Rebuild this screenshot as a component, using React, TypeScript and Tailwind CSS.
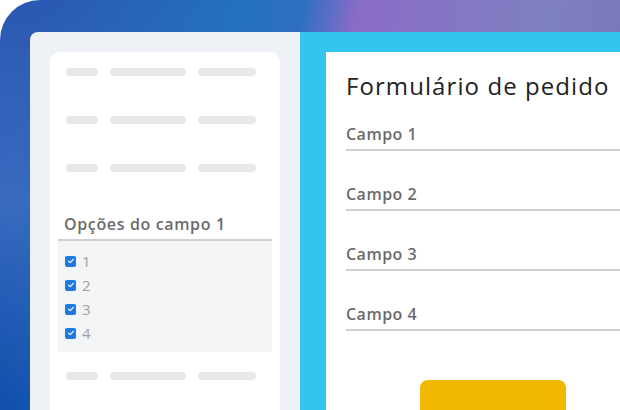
const skeletonRows = [0, 1, 2];
const options = ["1", "2", "3", "4"];
const fields = ["Campo 1", "Campo 2", "Campo 3", "Campo 4"];

function SkeletonRow() {
  return (
    <div className="flex h-2 items-center gap-3">
      <span className="h-2 w-8 rounded-full bg-[#e8e8e8]" />
      <span className="h-2 w-[76px] rounded-full bg-[#e8e8e8]" />
      <span className="h-2 w-[58px] rounded-full bg-[#e8e8e8]" />
    </div>
  );
}

function CheckIcon() {
  return (
    <span className="flex h-[11px] w-[11px] items-center justify-center rounded-[2px] bg-[#1f7ae0]">
      <svg viewBox="0 0 10 10" className="h-2 w-2" fill="none">
        <path d="M2 5.2l2 1.9 4-4.2" stroke="white" strokeWidth="1.5" strokeLinecap="round" strokeLinejoin="round" />
      </svg>
    </span>
  );
}

export default function App() {
  return (
    <div className="h-[410px] w-[620px] overflow-hidden bg-white font-['Open_Sans',sans-serif]">
      <div className="h-full w-full rounded-tl-[40px] bg-[linear-gradient(100deg,rgba(36,112,192,0)_5%,#2470c0_35%,#2f6fc2_44%,#8a6cc8_52%,#7e80c0_80%,#7a70b8_100%),linear-gradient(to_bottom,#2a58b2_0%,#3a6bbf_50%,#0b47a6_100%)] pl-[30px] pt-8">
        <div className="flex h-full">
          <div className="w-[270px] rounded-tl-lg bg-[#eef1f5] px-5 pt-5">
            <div className="h-[400px] rounded-t-[10px] bg-white px-2 pt-4">
              <div className="flex flex-col gap-10 pl-2">
                {skeletonRows.map((r) => (
                  <SkeletonRow key={r} />
                ))}
              </div>
              <div className="mt-[42px] border-b-2 border-[#d0d0d0] pb-[5px] pl-1.5 text-[16px] leading-5 font-semibold tracking-[0.04em] text-[#6b6b6b]">
                Opções do campo 1
              </div>
              <div className="flex flex-col gap-2 bg-[#f3f4f6] pb-[11px] pl-[7px] pt-3">
                {options.map((o) => (
                  <div key={o} className="flex h-4 items-center gap-[6px]">
                    <CheckIcon />
                    <span className="text-[15px] leading-4 font-medium text-[#a0a0a0]">{o}</span>
                  </div>
                ))}
              </div>
              <div className="mt-5 pl-2">
                <SkeletonRow />
              </div>
            </div>
          </div>
          <div className="flex-1 bg-[#35c4ef] pl-[26px] pt-5">
            <div className="h-[400px] bg-white pl-[20px] pt-5">
              <h1 className="text-[24px] leading-7 font-normal tracking-[0.045em] text-[#222]">
                Formulário de pedido
              </h1>
              <div className="mt-6 flex flex-col gap-[33px]">
                {fields.map((f) => (
                  <div key={f} className="border-b-2 border-[#cfcfcf] pb-[5px]">
                    <span className="block text-[16px] leading-5 font-semibold tracking-[0.03em] text-[#6b6b6b]">{f}</span>
                  </div>
                ))}
              </div>
              <div className="ml-[74px] mt-[49px] h-10 w-[146px] rounded-lg bg-[#f0b800]" />
            </div>
          </div>
        </div>
      </div>
    </div>
  );
}
